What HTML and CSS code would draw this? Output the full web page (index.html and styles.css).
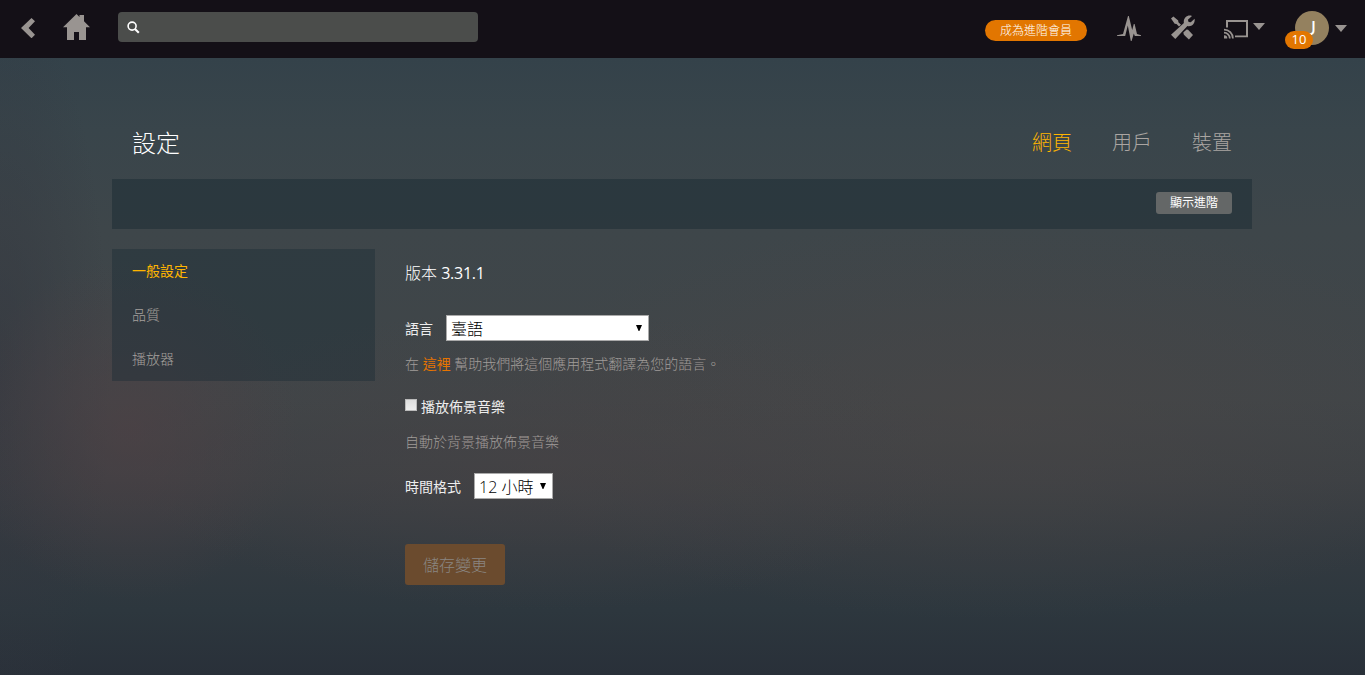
FILE: index.html
```html
<!DOCTYPE html>
<html lang="zh-Hant">
<head>
<meta charset="utf-8">
<title>設定</title>
<link rel="stylesheet" href="styles.css">
</head>
<body>
<header class="nav">
  <div class="nav-left">
    <a class="back"><svg width="14" height="20" viewBox="0 0 14 20"><path d="M10.5 0 14 3.2 7.6 10 14 16.8 10.5 20.3 0 10Z"/></svg></a>
    <a class="home"><svg width="27" height="26" viewBox="0 0 27 26"><path d="M13.5 0 16.5 3V1H21V7.3L27 13.3H23V26H16V18H11V26H4V13.3H0Z"/></svg></a>
    <label class="search"><svg width="13" height="13" viewBox="0 0 13 13"><circle cx="5.1" cy="5.1" r="4" fill="none" stroke="#fff" stroke-width="1.6"/><path d="M8 8 11.8 11.8" stroke="#fff" stroke-width="2.1"/></svg><input class="search-input" type="text"></label>
  </div>
  <div class="nav-right">
    <a class="premium">成為進階會員</a>
    <a class="activity"><svg width="24" height="25" viewBox="0 0 24 25"><path d="M0 20V19.2L6 18 11 0H11.8L15.2 14 16.8 8H17.6L20 18 24 19.2V20H17.8L16.8 17.5 14.6 25H13.8L10.8 9.5 8.2 20Z"/></svg></a>
    <a class="tools"><svg width="25" height="25" viewBox="0 0 25 25"><path d="M1 3.6 3.4 1.6 8.2 5.4 8.4 7.2 11 9.8 9 11.6 6.5 9 4.7 8.7Z"/><path d="M13.3 17.6 16.6 14.4 18.1 14.7 23 20 18.9 24.4 13.9 19.8Z"/><path d="M22 .9 17.9 4.7 18.6 7 20.8 7.3 24.6 3.8C25.4 8.8 21.5 12.3 17.4 11.1L5.3 24 1 19.8 13.9 8C12.9 3.1 17.4-.9 22 .9Z"/></svg></a>
    <a class="cast"><svg width="24" height="19" viewBox="0 0 24 19"><path d="M2 7.5V0H24V17.3H11V15.5H22V2H4V7.5ZM0 15.2A3.2 3.2 0 0 1 3.3 18.5H0Z"/><path d="M0 12.7A5.8 5.8 0 0 1 5.8 18.5M0 9.6A8.9 8.9 0 0 1 8.9 18.5" fill="none" stroke="#999491" stroke-width="1.8"/></svg><svg class="caret" width="12" height="7" viewBox="0 0 12 7"><path d="M0 0H12L6 7Z"/></svg></a>
    <a class="user"><span class="avatar">J<span class="badge">10</span></span><svg class="caret" width="12" height="7" viewBox="0 0 12 7"><path d="M0 0H12L6 7Z"/></svg></a>
  </div>
</header>
<main class="page">
  <div class="page-head">
    <h1 class="title">設定</h1>
    <nav class="tabs"><a class="tab active">網頁</a><a class="tab">用戶</a><a class="tab">裝置</a></nav>
  </div>
  <div class="filter-bar"><button class="advanced">顯示進階</button></div>
  <div class="columns">
    <nav class="side"><a class="side-item active">一般設定</a><a class="side-item">品質</a><a class="side-item">播放器</a></nav>
    <form class="settings">
      <div class="version">版本 <span class="number">3.31.1</span></div>
      <div class="row">
        <label class="label">語言</label>
        <span class="select-box"><select class="select language"><option>臺語</option></select><svg class="arrow" width="6" height="6" viewBox="0 0 6 6"><path d="M0 0H6L3.4 6H2.6Z"/></svg></span>
      </div>
      <p class="help help-language">在 <a class="link">這裡</a> 幫助我們將這個應用程式翻譯為您的語言。</p>
      <label class="check-row"><input class="check" type="checkbox">播放佈景音樂</label>
      <p class="help help-music">自動於背景播放佈景音樂</p>
      <div class="row">
        <label class="label">時間格式</label>
        <span class="select-box"><select class="select time"><option>12 小時</option></select><svg class="arrow" width="6" height="6" viewBox="0 0 6 6"><path d="M0 0H6L3.4 6H2.6Z"/></svg></span>
      </div>
      <button class="save" type="button" disabled>儲存變更</button>
    </form>
  </div>
</main>
</body>
</html>
```
FILE: styles.css
```css
* { box-sizing: border-box; }
body {
  margin: 0;
  height: 675px;
  overflow: hidden;
  font: 300 14px/20px "Open Sans", "Noto Sans CJK TC", sans-serif;
  color: #eee;
  background:
    radial-gradient(ellipse 170px 170px at 130px 430px, rgba(80, 64, 68, .6), transparent),
    radial-gradient(ellipse 420px 150px at 540px 460px, rgba(72, 67, 69, .6), transparent),
    radial-gradient(ellipse 520px 200px at 1000px 420px, rgba(74, 70, 70, .6), transparent),
    radial-gradient(ellipse 110px 400px at 0 380px, rgba(50, 53, 62, .6), transparent),
    linear-gradient(#34424a 58px, #39454b 130px, #3e464a 230px, #404548 400px, #3c4044 480px, #333a40 550px, #2d373e 610px, #293039 675px);
}
a, h1, p { margin: 0; }
svg { display: block; flex: none; fill: #999491; }

.nav { display: flex; justify-content: space-between; height: 58px; background: #141017; }
.nav-left, .nav-right { display: flex; align-items: flex-start; }
.back { margin: 18px 28px 0 21px; }
.home { margin: 14px 28px 0 0; }
.search { display: flex; align-items: center; width: 360px; height: 30px; margin-top: 12px; padding: 0 9px; border-radius: 4px; background: #4b4d4b; }
.search-input { flex: 1; min-width: 0; margin-left: 8px; border: 0; outline: 0; background: none; color: #fff; }
.premium { width: 102px; height: 21px; margin: 20px 30px 0 0; border-radius: 11px; background: #e27600; color: #fff; font-size: 12px; font-weight: 300; line-height: 21px; text-align: center; }
.activity { margin: 16px 29px 0 0; }
.tools { margin: 15px 29px 0 0; }
.cast { display: flex; gap: 5px; margin: 20px 30px 0 0; }
.cast .caret { margin-top: 3px; }
.user { display: flex; gap: 6px; margin: 11px 18px 0 0; }
.user .caret { margin-top: 14px; }
.avatar { position: relative; width: 34px; height: 34px; border-radius: 50%; background: #94815f; color: #fff; font: 400 19px/34px Lato, "Open Sans", sans-serif; text-align: center; }
.badge { position: absolute; left: -10px; top: 20px; width: 28px; height: 18px; border-radius: 9px; background: #e27600; font: 400 13px/17px "Open Sans", sans-serif; }

.page { width: 1140px; margin-left: 112px; }
.page-head { display: flex; justify-content: space-between; height: 121px; padding: 70px 20px 0; }
.title { font-size: 24px; font-weight: 300; line-height: 30px; color: #fff; }
.tabs { display: flex; gap: 40px; font-size: 20px; line-height: 30px; color: #aaa5a2; }
.tab.active { color: #ffb500; }
.filter-bar { display: flex; justify-content: flex-end; height: 50px; padding: 13px 20px 0; background: rgba(22, 40, 48, .45); }
.advanced { width: 76px; height: 22px; padding: 0; border: 0; border-radius: 3px; background: #646767; color: #fff; font: 400 12px/22px "Open Sans", "Noto Sans CJK TC", sans-serif; }
.columns { display: flex; align-items: flex-start; gap: 30px; margin-top: 20px; }
.side { display: flex; flex-direction: column; width: 263px; background: rgba(26, 42, 52, .4); }
.side-item { height: 44px; padding-left: 20px; line-height: 44px; color: #a5a09d; }
.side-item.active { color: #ffb500; font-weight: 400; }
.settings { display: flex; flex-direction: column; align-items: flex-start; }
.version { height: 66px; padding-top: 14px; font-size: 16px; font-weight: 300; line-height: 20px; color: #fff; }
.number { font-weight: 400; letter-spacing: -.25px; }
.row { display: flex; height: 26px; gap: 13px; }
.label { padding-top: 4px; font-weight: 400; }
.select-box { position: relative; display: flex; }
.select { appearance: none; height: 26px; padding: 1px 4px 0; border: 1px solid #aaa; border-radius: 0; background: #fff; color: #000; font: 300 16px/24px "Open Sans", "Noto Sans CJK TC", sans-serif; }
.language { width: 203px; }
.time { width: 79px; }
.arrow { position: absolute; right: 7px; top: 10px; fill: #000; }
.help { height: 20px; line-height: 19px; color: #a09c99; }
.help-language { margin: 13px 0 23px; }
.help-music { margin: 15px 0 21px; }
.link { color: #e87400; font-weight: 400; }
.check-row { display: flex; height: 20px; font-weight: 400; }
.check { appearance: none; width: 12px; height: 12px; margin: 2px 4px 0 0; border: 1px solid #bbb; background: linear-gradient(#dedede, #eee); }
.save { width: 100px; height: 41px; margin-top: 45px; padding: 2px 0 0; border: 0; border-radius: 3px; background: #6b4b2e; color: #8a8682; font: 300 16px/39px "Open Sans", "Noto Sans CJK TC", sans-serif; }
```
